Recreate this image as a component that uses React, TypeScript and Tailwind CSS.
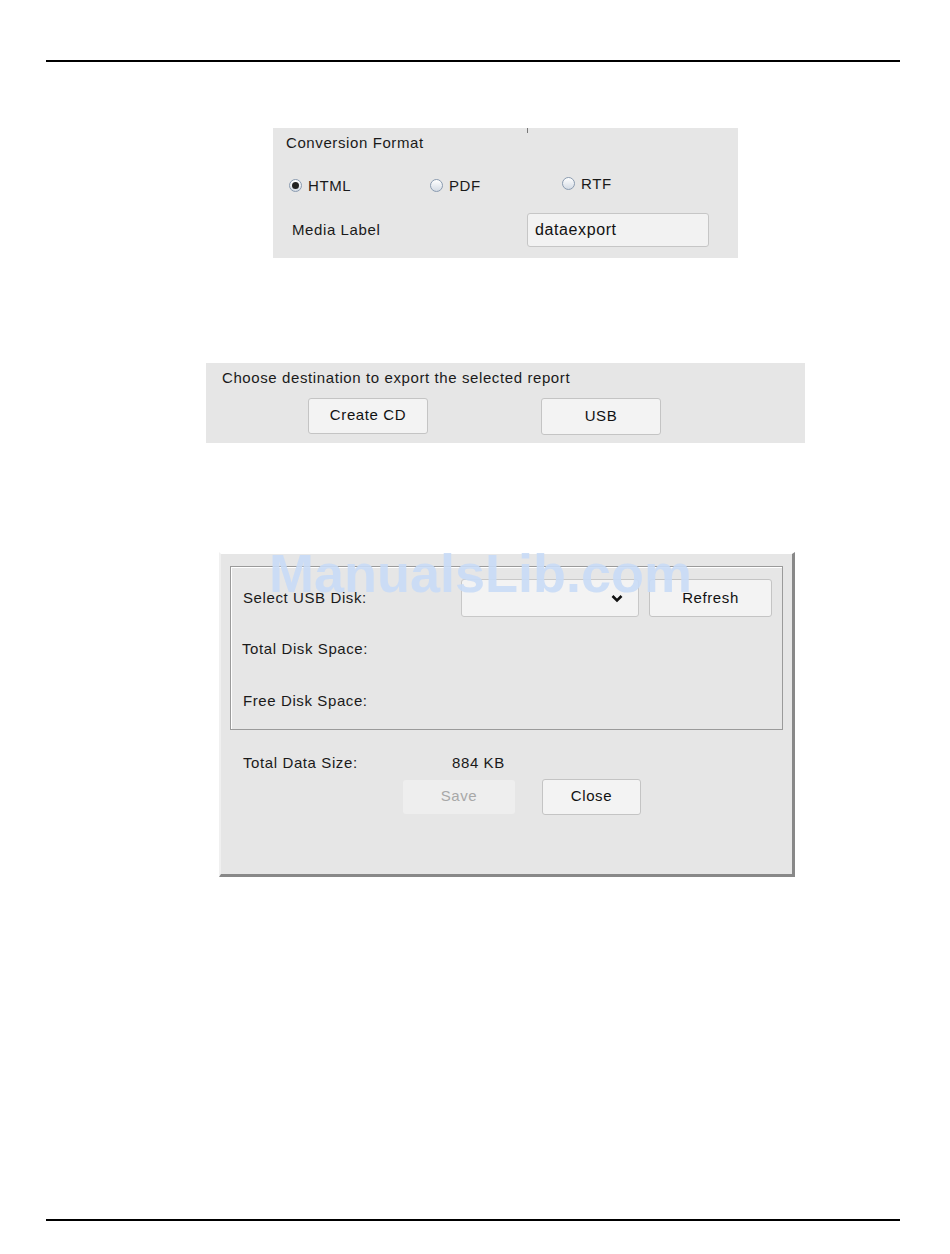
import React from 'react';

const font = { fontFamily: '"Liberation Sans", Arial, sans-serif', letterSpacing: '0.6px' };

const Radio: React.FC<{ label: string; checked?: boolean }> = ({ label, checked }) => (
  <div className="flex items-center gap-[6px]">
    <span className="w-[13px] h-[13px] rounded-full border border-[#8a9bb0] bg-gradient-to-b from-white to-[#d4dbe4] flex items-center justify-center">
      {checked && <span className="w-[7px] h-[7px] rounded-full bg-[#222]" />}
    </span>
    <span className="text-[15px] text-[#1a1a1a]">{label}</span>
  </div>
);

const Btn: React.FC<{ label: string; className?: string; disabled?: boolean }> = ({ label, className, disabled }) => (
  <div
    className={
      'flex items-center justify-center rounded-[3px] text-[15px] ' +
      (disabled
        ? 'bg-[#eeeeee] text-[#a8a8a8] '
        : 'bg-[#f3f3f3] border border-[#c4c4c4] text-[#111] ') +
      (className ?? '')
    }
  >
    {label}
  </div>
);

export default function App() {
  return (
    <div className="relative w-[950px] h-[1254px] bg-white pt-[60px]" style={font}>
      <div className="ml-[46px] w-[854px] h-[2px] bg-black" />

      {/* Conversion format */}
      <div className="relative ml-[273px] mt-[66px] w-[465px] h-[130px] bg-[#e6e6e6] pl-[13px] pt-[4px]">
        <div className="absolute left-[254px] top-0 w-px h-[5px] bg-[#777]" />
        <div className="text-[15px] text-[#1a1a1a]">Conversion Format</div>
        <div className="flex items-center mt-[20px] pl-[3px]">
          <div className="w-[141px]"><Radio label="HTML" checked /></div>
          <div className="w-[132px]"><Radio label="PDF" /></div>
          <div className="-mt-[4px]"><Radio label="RTF" /></div>
        </div>
        <div className="flex items-center mt-[16px] pl-[6px]">
          <div className="w-[235px] text-[15px] text-[#1a1a1a]">Media Label</div>
          <div className="w-[182px] h-[34px] rounded-[3px] border border-[#c6c6c6] bg-[#f2f2f2] flex items-center px-[7px] text-[16px] text-[#111]">
            dataexport
          </div>
        </div>
      </div>

      {/* Destination */}
      <div className="ml-[206px] mt-[105px] w-[599px] h-[80px] bg-[#e6e6e6] pl-[16px] pt-[4px]">
        <div className="text-[15px] text-[#1a1a1a]">Choose destination to export the selected report</div>
        <div className="flex mt-[8px] pl-[86px]">
          <Btn label="Create CD" className="w-[120px] h-[36px]" />
          <Btn label="USB" className="w-[120px] h-[37px] ml-[113px]" />
        </div>
      </div>

      {/* USB dialog */}
      <div className="relative ml-[219px] mt-[109px] w-[576px] h-[325px] bg-[#e6e6e6] border-t-2 border-l-2 border-t-white border-l-[#f0f0f0] border-r-[3px] border-b-[3px] border-r-[#888] border-b-[#888] pt-[12px] px-[9px]">
        <div className="h-[164px] border border-[#9a9a9a] shadow-[inset_1px_1px_0_#fff] pl-[12px] pr-[8px] pt-[12px]">
          <div className="flex items-center h-[38px]">
            <div className="w-[218px] text-[15px] text-[#1a1a1a]">Select USB Disk:</div>
            <div className="w-[178px] h-[38px] rounded-[3px] border border-[#c8c8c8] bg-[#f3f3f3] flex items-center justify-end pr-[15px]">
              <svg width="12" height="9" viewBox="0 0 12 9">
                <path d="M1.5 2 L6 6.5 L10.5 2" fill="none" stroke="#111" strokeWidth="2.6" />
              </svg>
            </div>
            <Btn label="Refresh" className="w-[123px] h-[38px] ml-[10px]" />
          </div>
          <div className="mt-[21px] text-[15px] text-[#1a1a1a] -ml-px">Total Disk Space:</div>
          <div className="mt-[29px] text-[15px] text-[#1a1a1a]">Free Disk Space:</div>
        </div>
        <div className="flex mt-[22px] pl-[13px] text-[15px] text-[#1a1a1a]">
          <div className="w-[209px]">Total Data Size:</div>
          <div>884 KB</div>
        </div>
        <div className="flex items-center mt-[4px] pl-[173px]">
          <Btn label="Save" disabled className="w-[112px] h-[34px]" />
          <Btn label="Close" className="w-[99px] h-[36px] ml-[27px]" />
        </div>
        <div className="absolute left-[48px] top-[-8px] text-[54px] font-bold text-[#c9dcf7] leading-none tracking-normal pointer-events-none select-none opacity-90">
          ManualsLib.com
        </div>
      </div>

      <div className="ml-[46px] w-[854px] mt-[342px] h-[2px] bg-black" />
    </div>
  );
}
